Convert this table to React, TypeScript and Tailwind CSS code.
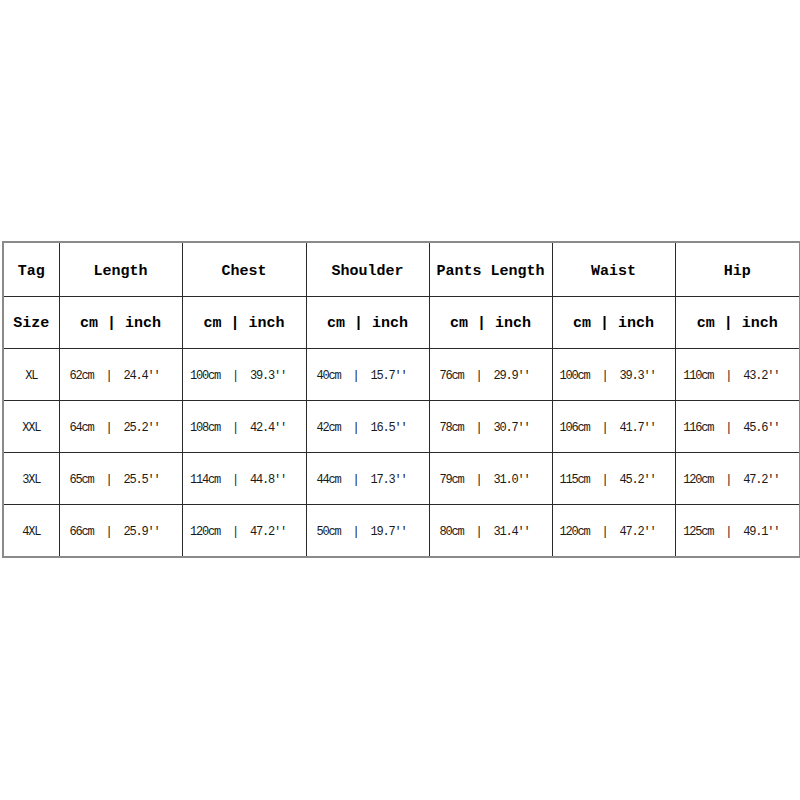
const columns = ["Length", "Chest", "Shoulder", "Pants Length", "Waist", "Hip"];

const rows: { tag: string; values: [string, string][] }[] = [
  {
    tag: "XL",
    values: [["62cm", "24.4''"], ["100cm", "39.3''"], ["40cm", "15.7''"], ["76cm", "29.9''"], ["100cm", "39.3''"], ["110cm", "43.2''"]],
  },
  {
    tag: "XXL",
    values: [["64cm", "25.2''"], ["108cm", "42.4''"], ["42cm", "16.5''"], ["78cm", "30.7''"], ["106cm", "41.7''"], ["116cm", "45.6''"]],
  },
  {
    tag: "3XL",
    values: [["65cm", "25.5''"], ["114cm", "44.8''"], ["44cm", "17.3''"], ["79cm", "31.0''"], ["115cm", "45.2''"], ["120cm", "47.2''"]],
  },
  {
    tag: "4XL",
    values: [["66cm", "25.9''"], ["120cm", "47.2''"], ["50cm", "19.7''"], ["80cm", "31.4''"], ["120cm", "47.2''"], ["125cm", "49.1''"]],
  },
];

const head = "border border-[#2a2a2a] pt-[5px] text-center align-middle font-bold text-[15px] text-black";
const cell = "border border-[#2a2a2a] pt-[4px] text-center align-middle text-[12px] tracking-[-1.2px] text-[#1a1a1a] whitespace-pre";

export default function App() {
  return (
    <div className="h-[800px] w-[800px] bg-white pt-[241px] pl-[2px] font-['Liberation_Mono',monospace]">
      <table className="table-fixed border-collapse border-2 border-[#8a8a8a] w-[797px]">
        <colgroup>
          <col className="w-[56px]" />
          <col className="w-[123px]" />
          <col className="w-[124px]" />
          <col className="w-[123px]" />
          <col className="w-[123px]" />
          <col className="w-[123px]" />
          <col className="w-[125px]" />
        </colgroup>
        <tbody>
          <tr className="h-[54px]">
            <td className={head}>Tag</td>
            {columns.map((c) => (
              <td key={c} className={head}>
                {c}
              </td>
            ))}
          </tr>
          <tr className="h-[52px]">
            <td className={head}>Size</td>
            {columns.map((c) => (
              <td key={c} className={head}>
                cm | inch
              </td>
            ))}
          </tr>
          {rows.map((r, ri) => (
            <tr key={r.tag} className={ri === 3 ? "h-[53px]" : "h-[52px]"}>
              <td className={cell}>{r.tag}</td>
              {r.values.map(([cm, inch], i) => (
                <td key={i} className={cell}>
                  {`${cm}  |  ${inch}  `}
                </td>
              ))}
            </tr>
          ))}
        </tbody>
      </table>
    </div>
  );
}
